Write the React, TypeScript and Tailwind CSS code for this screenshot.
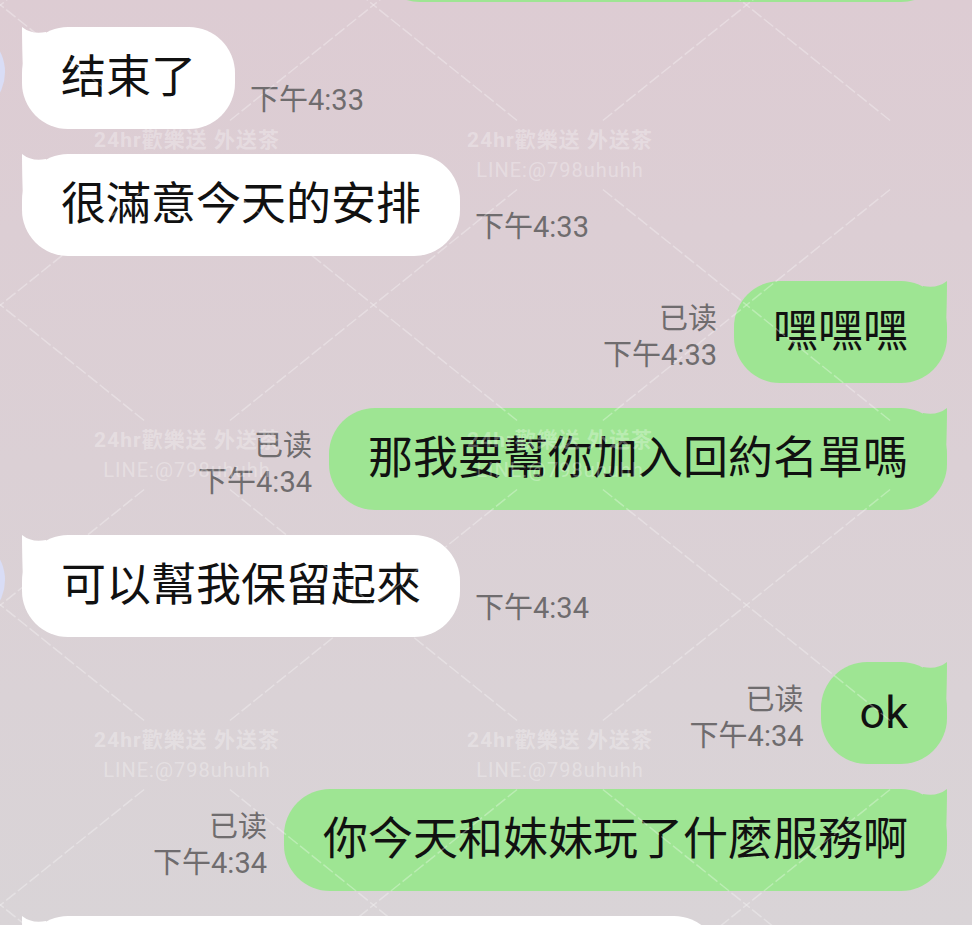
import React from 'react';

const FONT = { fontFamily: 'Roboto, "Noto Sans CJK SC", sans-serif' };

type Msg =
  | { side: 'left'; text: string; time: string; avatar?: boolean; width?: string }
  | { side: 'right'; text: string; time: string; width?: string };

const messages: Msg[] = [
  { side: 'left', text: '结束了', time: '下午4:33', avatar: true },
  { side: 'left', text: '很滿意今天的安排', time: '下午4:33' },
  { side: 'right', text: '嘿嘿嘿', time: '下午4:33' },
  { side: 'right', text: '那我要幫你加入回約名單嗎', time: '下午4:34' },
  { side: 'left', text: '可以幫我保留起來', time: '下午4:34', avatar: true },
  { side: 'right', text: 'ok', time: '下午4:34' },
  { side: 'right', text: '你今天和妹妹玩了什麼服務啊', time: '下午4:34' },
];

const LeftTail = () => (
  <svg className="absolute left-0 top-0" width="24" height="46" viewBox="0 0 24 46">
    <path d="M0 0 Q10 8 24 5 L24 46 L1 46 Q0 20 0 0 Z" fill="#ffffff" />
  </svg>
);

const RightTail = () => (
  <svg className="absolute right-0 top-0" width="24" height="46" viewBox="0 0 24 46">
    <path d="M24 0 Q14 8 0 5 L0 46 L23 46 Q24 20 24 0 Z" fill="#9ee593" />
  </svg>
);

const LeftRow = ({ text, time, avatar, width }: { text: string; time: string; avatar?: boolean; width?: string }) => (
  <div className={`flex items-end ${avatar ? '' : 'pl-[22px]'}`}>
    {avatar && <div className="w-[90px] h-[90px] shrink-0 self-start -ml-[85px] mr-[17px] rounded-full bg-[#d9ddf6]" />}
    <div
      className={`relative h-[102px] flex items-center px-[39px] rounded-[46px] bg-white text-[45px] leading-[54px] text-[#111111] whitespace-nowrap ${width ?? ''}`}
    >
      <LeftTail />
      <span className="relative">{text}</span>
    </div>
    {time && <div className="ml-[15px] mb-[11px] text-[29px] leading-[36px] text-[#6f6c6e]">{time}</div>}
  </div>
);

const RightRow = ({ text, time, width }: { text: string; time: string; width?: string }) => (
  <div className="flex items-end justify-end pr-[25px]">
    {time && (
      <div className="mr-[17px] mb-[10px] text-right text-[29px] leading-[36px] text-[#6f6c6e]">
        <div>已读</div>
        <div>{time}</div>
      </div>
    )}
    <div
      className={`relative h-[102px] flex items-center px-[39px] rounded-[46px] bg-[#9ee593] text-[45px] leading-[54px] text-[#111111] whitespace-nowrap ${width ?? ''}`}
    >
      <RightTail />
      <span className="relative">{text}</span>
    </div>
  </div>
);

// watermark lattice: centers of the "24hr" stamps plus the diagonal lines between them
const COLS = [-186, 187, 560, 933, 1306];
const ROWS = [-145, 155, 455, 755, 1055];
const DX = 186.5;
const DY = 150;
const GAP = 0.23;

const Watermark = () => {
  const segs: { x1: number; y1: number; x2: number; y2: number }[] = [];
  COLS.forEach((cx) =>
    ROWS.forEach((cy) => {
      [
        [1, 1],
        [1, -1],
        [-1, 1],
        [-1, -1],
      ].forEach(([sx, sy]) => {
        segs.push({
          x1: cx + sx * DX * GAP,
          y1: cy + sy * DY * GAP,
          x2: cx + sx * DX,
          y2: cy + sy * DY,
        });
      });
    })
  );

  const stamps: [number, number][] = [];
  [187, 560].forEach((x) => [155, 455, 755].forEach((y) => stamps.push([x, y])));

  return (
    <div className="absolute inset-0 pointer-events-none">
      <svg className="absolute inset-0" width="972" height="925">
        {segs.map((s, i) => (
          <line
            key={i}
            x1={s.x1}
            y1={s.y1}
            x2={s.x2}
            y2={s.y2}
            stroke="#ffffff"
            strokeOpacity="0.3"
            strokeWidth="1.5"
            strokeDasharray="12 3"
          />
        ))}
      </svg>
      {stamps.map(([x, y]) => (
        <div
          key={`${x}-${y}`}
          className="absolute -translate-x-1/2 -translate-y-1/2 text-center text-white/30 whitespace-nowrap tracking-[1px]"
          style={{ left: x, top: y }}
        >
          <div className="text-[21px] leading-[30px] font-bold">24hr歡樂送 外送茶</div>
          <div className="text-[20px] leading-[30px]">LINE:@798uhuhh</div>
        </div>
      ))}
    </div>
  );
};

export default function App() {
  return (
    <div
      className="relative w-[972px] h-[925px] overflow-hidden bg-gradient-to-b from-[#ddccd3] to-[#d9d4d7]"
      style={FONT}
    >
      <div className="flex flex-col gap-[25px]">
        {/* previous message, mostly scrolled off */}
        <div className="-mt-[100px]">
          <RightRow text="" time="" width="w-[573px]" />
        </div>
        {messages.map((m, i) =>
          m.side === 'left' ? (
            <LeftRow key={i} text={m.text} time={m.time} avatar={m.avatar} />
          ) : (
            <RightRow key={i} text={m.text} time={m.time} />
          )
        )}
        {/* next message, cut at the bottom */}
        <LeftRow text="" time="" avatar width="w-[698px]" />
      </div>
      <Watermark />
    </div>
  );
}
